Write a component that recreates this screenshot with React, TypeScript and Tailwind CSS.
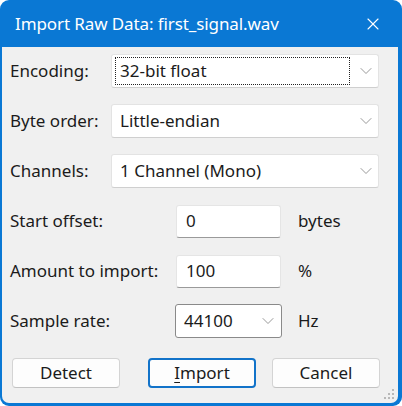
import { X, ChevronDown } from 'lucide-react'

const font = { fontFamily: '"Noto Sans", "Open Sans", sans-serif' }

function Combo({ value, focused }: { value: string; focused?: boolean }) {
  return (
    <div className="flex h-[34px] w-[268px] items-center rounded-[3px] border border-[#e3e3e3] border-b-[#cfcfcf] bg-white pl-[3px] pr-[2px]">
      <div
        className={
          'flex h-[28px] flex-1 items-center pl-[4px] ' +
          (focused ? 'border border-dotted border-[#222]' : 'border border-transparent')
        }
      >
        {value}
      </div>
      <ChevronDown className="ml-[6px] h-[20px] w-[20px] text-[#8f8f8f]" strokeWidth={1.1} />
    </div>
  )
}

function Field({ value }: { value: string }) {
  return (
    <div className="flex h-[33px] w-[105px] items-center rounded-[3px] border border-[#e5e5e5] border-b-[#9a9a9a] bg-white pl-[9px]">
      {value}
    </div>
  )
}

function Btn({ children, primary }: { children: React.ReactNode; primary?: boolean }) {
  return (
    <div
      className={
        'flex h-[30px] w-[108px] items-center justify-center rounded-[4px] bg-[#fdfdfd] ' +
        (primary ? 'border-2 border-[#1273c9]' : 'border border-[#d4d4d4] border-b-[#c2c2c2]')
      }
    >
      {children}
    </div>
  )
}

export default function App() {
  return (
    <div className="h-[406px] w-[402px] bg-white text-[17px] text-[#1b1b1b]" style={font}>
      <div className="flex h-full w-full flex-col overflow-hidden rounded-[9px] bg-[#0a78d4] pb-[3px] pl-[2px] pr-[4px]">
        {/* Title bar */}
        <div className="flex h-[47px] shrink-0 items-center justify-between pl-[13px] pr-[15px] text-[17px] tracking-[-0.1px] text-white">
          <span>Import Raw Data: first_signal.wav</span>
          <X className="h-[20px] w-[20px]" strokeWidth={1.3} />
        </div>

        {/* Body */}
        <div className="relative flex flex-1 flex-col rounded-b-[7px] bg-[#f0f0f0] px-[8px] pt-[7px]">
          <div className="flex flex-col gap-[16px]">
            <div className="flex items-center">
              <span className="w-[101px]">Encoding:</span>
              <Combo value="32-bit float" focused />
            </div>
            <div className="flex items-center">
              <span className="w-[101px]">Byte order:</span>
              <Combo value="Little-endian" />
            </div>
            <div className="flex items-center">
              <span className="w-[101px]">Channels:</span>
              <Combo value="1 Channel (Mono)" />
            </div>
            <div className="flex h-[34px] items-center">
              <span className="w-[166px]">Start offset:</span>
              <Field value="0" />
              <span className="ml-[17px]">bytes</span>
            </div>
            <div className="flex h-[34px] items-center">
              <span className="w-[166px]">Amount to import:</span>
              <Field value="100" />
              <span className="ml-[17px]">%</span>
            </div>
            <div className="flex h-[34px] items-center">
              <span className="w-[165px]">Sample rate:</span>
              <div className="flex h-[34px] w-[107px] items-center justify-between rounded-[3px] border border-[#8a8a8a] bg-white pl-[8px] pr-[3px]">
                <span>44100</span>
                <ChevronDown className="h-[20px] w-[20px] text-[#8f8f8f]" strokeWidth={1.1} />
              </div>
              <span className="ml-[16px]">Hz</span>
            </div>
          </div>

          <div className="mt-[20px] flex items-center pl-[2px]">
            <Btn>Detect</Btn>
            <div className="ml-[28px]">
              <Btn primary>
                <span>
                  <span className="underline underline-offset-[3px]">I</span>mport
                </span>
              </Btn>
            </div>
            <div className="ml-[16px]">
              <Btn>Cancel</Btn>
            </div>
          </div>

          {/* resize grip */}
          <svg className="absolute bottom-[3px] right-[3px]" width="11" height="11" viewBox="0 0 11 11">
            <g fill="#b8b8b8">
              <rect x="8" y="0" width="2" height="2" />
              <rect x="4" y="4" width="2" height="2" />
              <rect x="8" y="4" width="2" height="2" />
              <rect x="0" y="8" width="2" height="2" />
              <rect x="4" y="8" width="2" height="2" />
              <rect x="8" y="8" width="2" height="2" />
            </g>
          </svg>
        </div>
      </div>
    </div>
  )
}
